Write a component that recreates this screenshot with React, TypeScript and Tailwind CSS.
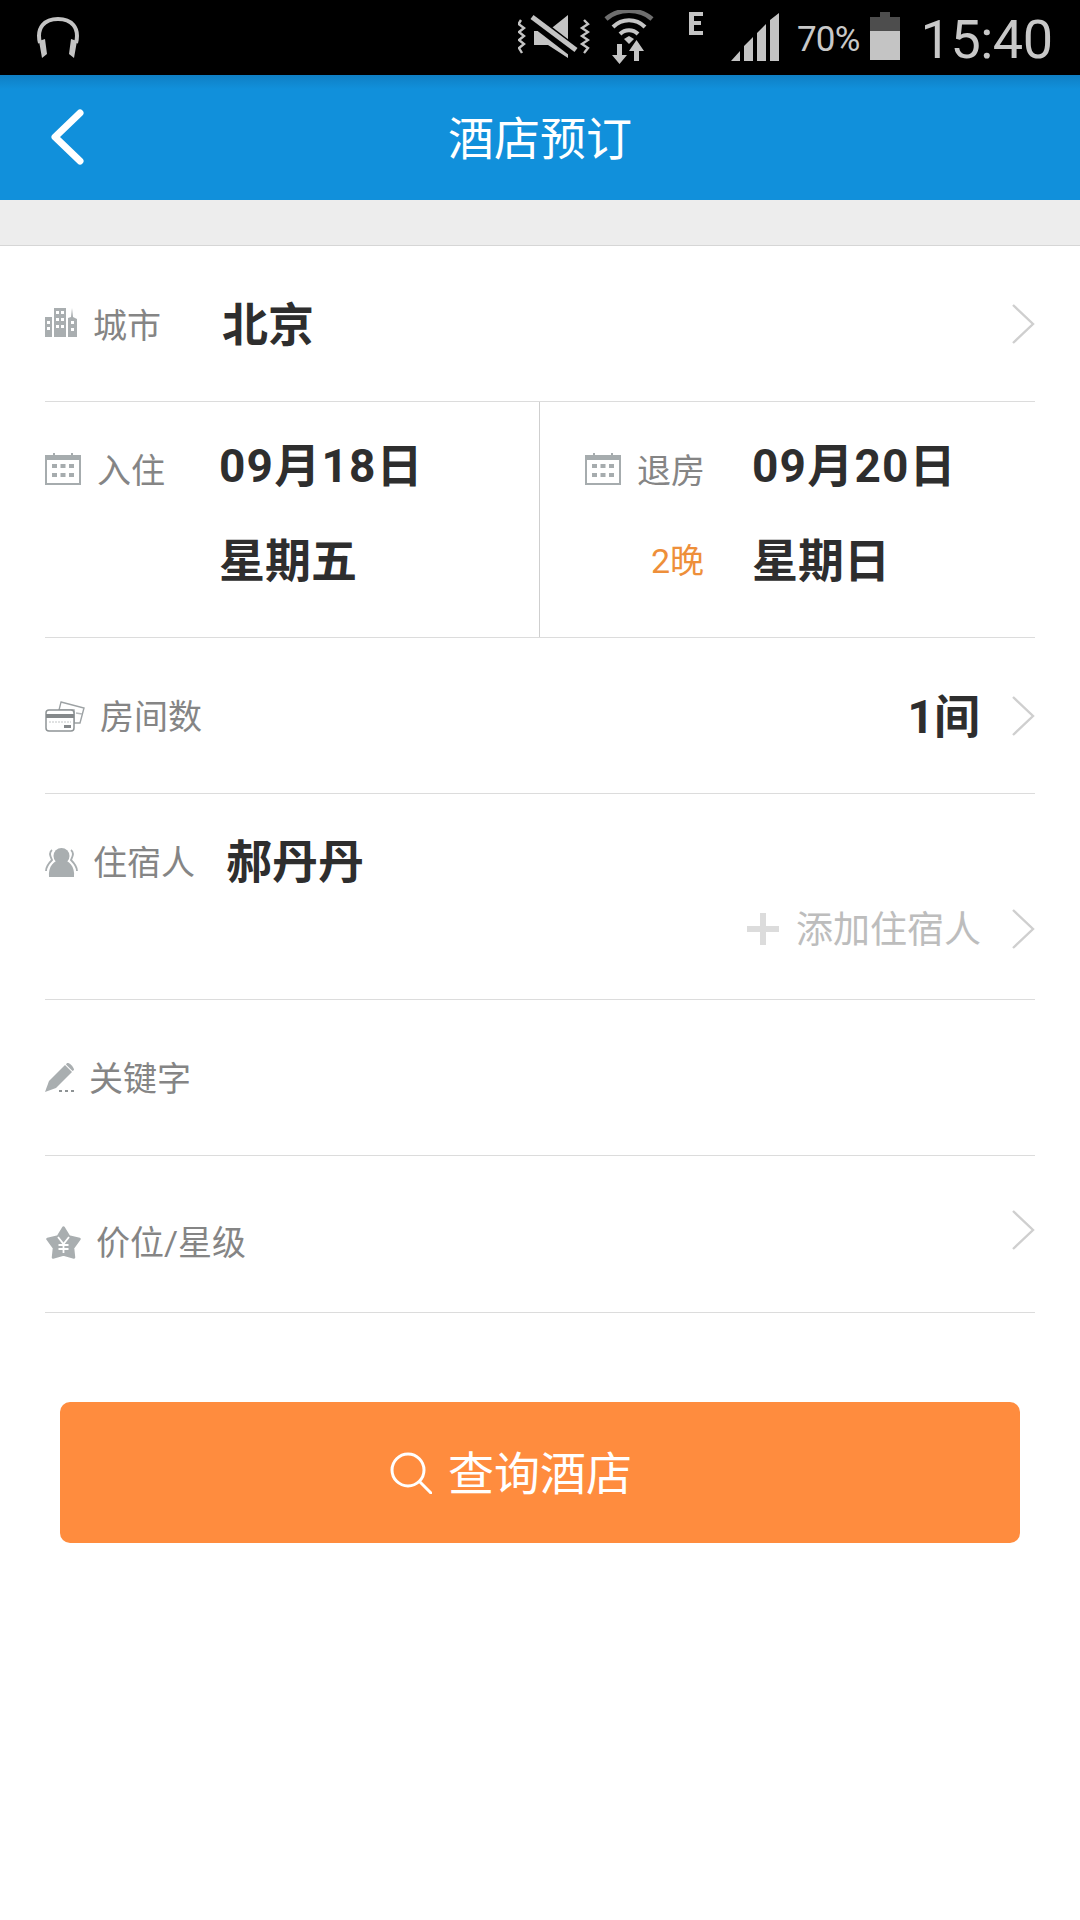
const CJK = { fontFamily: '"Roboto", "Noto Sans CJK SC", sans-serif' };

function Chevron({ className = "" }: { className?: string }) {
  return (
    <svg width="24" height="42" viewBox="0 0 24 42" className={className} fill="none">
      <path d="M2 2 L22 21 L2 40" stroke="#cfcfcf" strokeWidth="2.4" />
    </svg>
  );
}

function CalendarIcon() {
  return (
    <svg width="36" height="32" viewBox="0 0 36 32" fill="none" className="shrink-0 mt-[6px]">
      <rect x="1" y="3" width="34" height="28" stroke="#a6acae" strokeWidth="2" />
      <rect x="0" y="2" width="36" height="5" fill="#a6acae" />
      <rect x="8" y="0" width="2" height="4" fill="#a6acae" />
      <rect x="26" y="0" width="2" height="4" fill="#a6acae" />
      {[7, 15.5, 24].map((x) => (
        <g key={x} fill="#a6acae">
          <rect x={x} y="11" width="5" height="4" />
          <rect x={x} y="20" width="5" height="4" />
        </g>
      ))}
    </svg>
  );
}

function CityIcon() {
  return (
    <svg width="32" height="30" viewBox="0 0 32 30" className="shrink-0 mb-[4px]">
      <rect x="0" y="10" width="7" height="20" fill="#a9aeb0" />
      <rect x="9" y="1" width="12" height="29" fill="#a9aeb0" />
      <path d="M23 30 V11 L26 10 L27 1 L28 10 L32 12 V30 Z" fill="#a9aeb0" />
      <g fill="#fff">
        <rect x="2" y="14" width="3" height="3" />
        <rect x="2" y="20" width="3" height="3" />
        <rect x="11" y="4" width="3" height="3" />
        <rect x="16" y="4" width="3" height="3" />
        <rect x="11" y="11" width="3" height="3" />
        <rect x="16" y="11" width="3" height="3" />
        <rect x="11" y="18" width="3" height="3" />
        <rect x="16" y="18" width="3" height="3" />
        <rect x="26" y="14" width="3" height="3" />
        <rect x="26" y="21" width="3" height="3" />
      </g>
    </svg>
  );
}

function CardsIcon() {
  return (
    <svg width="41" height="32" viewBox="0 0 41 32" fill="none" className="shrink-0">
      <path d="M16 2 L39 8 L35 23 H29 V10 H14 Z" stroke="#9da2a4" strokeWidth="1.4" fill="#fff" />
      <path d="M31 13 L37 14" stroke="#b5b9bb" strokeWidth="1.4" />
      <rect x="1" y="10" width="28" height="21" rx="3" stroke="#8f9496" strokeWidth="1.5" fill="#fff" />
      <rect x="1" y="14" width="28" height="4" fill="#85898b" />
      <path d="M4 22 H26" stroke="#c2c5c6" strokeWidth="1" strokeDasharray="2 1" />
      <rect x="19" y="25" width="7" height="3" fill="#85898b" />
    </svg>
  );
}

function GuestsIcon() {
  return (
    <svg width="33" height="29" viewBox="0 0 33 29" className="shrink-0">
      <path d="M7 2 C3 5 6 10 7 12 C4 15 1 18 1 23 M26 2 C30 5 27 10 26 12 C29 15 32 18 32 23" fill="none" stroke="#a9aeb0" strokeWidth="1.8" />
      <circle cx="16.5" cy="8" r="8" fill="#a9aeb0" />
      <path d="M4 29 C3 18 9 12 16.5 12 C24 12 30 18 29 29 Z" fill="#a9aeb0" />
    </svg>
  );
}

function PencilIcon() {
  return (
    <svg width="30" height="30" viewBox="0 0 30 30" className="shrink-0">
      <path d="M0 29 L4 18 L20 2 L27 9 L11 25 Z" fill="#a9aeb0" />
      <path d="M22 0 C24 -1 29 4 29 7 L27.5 8 L21 1.5 Z" fill="#a9aeb0" />
      <g fill="#8d9294">
        <rect x="14" y="27" width="3" height="2" />
        <rect x="20" y="27" width="3" height="2" />
        <rect x="26" y="27" width="3" height="2" />
      </g>
    </svg>
  );
}

function StarIcon() {
  return (
    <svg width="35" height="33" viewBox="0 0 35 33" className="shrink-0 ml-[1px] mt-[16px]">
      <path
        d="M17.5 1.5 L23 10.5 L33.5 13 L27 22 L28 31.5 L17.5 28.5 L7 31.5 L8 22 L1.5 13 L12 10.5 Z"
        fill="#a9aeb0"
        stroke="#a9aeb0"
        strokeWidth="2.5"
        strokeLinejoin="round"
      />
      <path d="M12 11 L17.5 18 L23 11 M17.5 18 V27 M12.5 19 H22.5 M12.5 23 H22.5" fill="none" stroke="#fff" strokeWidth="1.8" />
    </svg>
  );
}

function StatusBar() {
  return (
    <div className="h-[75px] bg-black flex items-start shrink-0 relative text-[#c8c8c8]">
      <svg width="46" height="42" viewBox="0 0 46 42" fill="none" className="ml-[35px] mt-[17px]">
        <path d="M5 26 C1 10 10 2 23 2 C36 2 45 10 41 26" stroke="#c4c4c4" strokeWidth="4" />
        <path d="M4 24 L10 22 L12 37 L7 41 Z M42 24 L36 22 L34 37 L39 41 Z" fill="#c4c4c4" />
      </svg>
      <svg width="72" height="46" viewBox="0 0 72 46" fill="none" className="ml-[437px] mt-[14px]">
        <path d="M3 6 L0.5 10 L6 14 L1 18 L6 22 L1 26 L6 30 L1 34 L4 39" stroke="#c4c4c4" strokeWidth="2.4" />
        <path d="M66 6 L70 10 L64 14 L70 18 L64 22 L70 26 L64 30 L70 34 L66 39" stroke="#c4c4c4" strokeWidth="2.4" />
        <path d="M16 17 H30 L50 1 V44 L30 31 H16 Z" fill="#c4c4c4" />
        <path d="M10 2 L62 42" stroke="#000" strokeWidth="12" />
        <path d="M14 3 L58 36" stroke="#c4c4c4" strokeWidth="5" />
      </svg>
      <svg width="50" height="54" viewBox="0 0 50 54" fill="none" className="ml-[14px] mt-[10px]">
        <path d="M2 9 C14 -2 36 -2 48 9" stroke="#6e6e6e" strokeWidth="4.5" />
        <path d="M9 17 C18 8 32 8 41 17" stroke="#c4c4c4" strokeWidth="4" />
        <path d="M16 24 C21 19 29 19 34 24" stroke="#c4c4c4" strokeWidth="4" />
        <path d="M20 29 L25 26 L30 29 L25 34 Z" fill="#c4c4c4" />
        <path d="M13 34 H18 V45 H23 L15.5 54 L8 45 H13 Z" fill="#c4c4c4" />
        <path d="M30 51 H35 V41 H40 L32.5 30 L25 41 H30 Z" fill="#c4c4c4" />
      </svg>
      <svg width="14" height="23" viewBox="0 0 14 23" className="ml-[35px] mt-[12px]">
        <path d="M0 0 H14 V4 H5 V9 H12 V13 H5 V19 H14 V23 H0 Z" fill="#c4c4c4" />
      </svg>
      <svg width="48" height="48" viewBox="0 0 48 48" className="ml-[28px] mt-[13px]">
        <path d="M0 48 L9 38 V48 Z M13 48 V33 L22 24 V48 Z M26 48 V20 L35 11 V48 Z M39 48 V7 L48 0 V48 Z" fill="#c4c4c4" />
      </svg>
      <span className="ml-[18px] mt-[20px] text-[35px] leading-[40px] font-normal tracking-[-0.8px]" style={{ fontFamily: "Roboto, sans-serif" }}>
        70%
      </span>
      <svg width="30" height="48" viewBox="0 0 30 48" className="ml-[10px] mt-[12px]">
        <rect x="10" y="0" width="10" height="5" fill="#4d4d4d" />
        <rect x="0" y="5" width="30" height="14" fill="#4d4d4d" />
        <rect x="0" y="19" width="30" height="29" fill="#c4c4c4" />
      </svg>
      <span className="ml-[21px] mt-[9px] text-[54px] leading-[62px] font-normal tracking-[-0.5px]" style={{ fontFamily: "Roboto, sans-serif" }}>
        15:40
      </span>
    </div>
  );
}

function DateColumn({
  icon,
  label,
  date,
  weekday,
  note,
  slot,
  className,
}: {
  icon: React.ReactNode;
  label: string;
  date: string;
  weekday: string;
  note?: string;
  slot: string;
  className: string;
}) {
  return (
    <div className={`flex flex-col pt-[34px] gap-[35px] ${className}`}>
      <div className="flex items-center h-[60px]">
        <div className={`flex items-center gap-[16px] ${slot}`}>
          {icon}
          <span className="text-[34px] text-[#858585] mt-[11px]">{label}</span>
        </div>
        <span className="text-[46px] font-bold text-[#2e2e2e] tracking-[1.2px]">{date}</span>
      </div>
      <div className="flex items-center h-[60px]">
        <div className={`${slot} text-right pr-[48px]`}>
          {note && <span className="text-[34px] text-[#ee8f3a]">{note}</span>}
        </div>
        <span className="text-[46px] font-bold text-[#2e2e2e]">{weekday}</span>
      </div>
    </div>
  );
}

export default function App() {
  return (
    <div className="w-[1080px] h-[1920px] bg-white flex flex-col overflow-hidden" style={CJK}>
      <StatusBar />
      <header className="h-[125px] shrink-0 flex items-center justify-center relative bg-[linear-gradient(#0f7fc4,#1190db_14px)]">
        <svg width="36" height="56" viewBox="0 0 36 56" fill="none" className="absolute left-[49px] top-[34px]">
          <path d="M31 4 L6 28 L31 52" stroke="#fff" strokeWidth="7" strokeLinecap="round" strokeLinejoin="round" />
        </svg>
        <h1 className="text-[46px] text-white font-normal mt-[3px]">酒店预订</h1>
      </header>
      <div className="h-[46px] shrink-0 bg-[#ededed] border-b border-[#d6d6d6]" />

      <div className="mx-[45px] flex flex-col">
        {/* City */}
        <div className="h-[156px] border-b border-[#dcdcdc] flex items-center">
          <CityIcon />
          <span className="ml-[16px] text-[34px] text-[#858585] whitespace-nowrap mt-[5px]">城市</span>
          <span className="ml-[61px] text-[46px] font-bold text-[#2e2e2e] mt-[3px]">北京</span>
          <Chevron className="ml-auto" />
        </div>

        {/* Stay dates */}
        <div className="h-[236px] border-b border-[#dcdcdc] flex">
          <DateColumn
            icon={<CalendarIcon />}
            label="入住"
            date="09月18日"
            weekday="星期五"
            slot="w-[174px]"
            className="w-[495px] border-r border-[#cfcfcf]"
          />
          <DateColumn
            icon={<CalendarIcon />}
            label="退房"
            date="09月20日"
            weekday="星期日"
            note="2晚"
            slot="w-[167px]"
            className="flex-1 pl-[45px]"
          />
        </div>

        {/* Rooms */}
        <div className="h-[156px] border-b border-[#dcdcdc] flex items-center">
          <CardsIcon />
          <span className="ml-[14px] text-[34px] text-[#858585] mt-[4px]">房间数</span>
          <span className="ml-auto text-[46px] font-bold text-[#2e2e2e] mt-[3px]">1间</span>
          <Chevron className="ml-[31px]" />
        </div>

        {/* Guests */}
        <div className="h-[206px] border-b border-[#dcdcdc] flex flex-col">
          <div className="flex items-center h-[60px] mt-[38px]">
            <GuestsIcon />
            <span className="ml-[15px] text-[34px] text-[#858585] mt-[2px]">住宿人</span>
            <span className="ml-[31px] text-[46px] font-bold text-[#2e2e2e] mt-[1px]">郝丹丹</span>
          </div>
          <div className="flex items-center justify-end h-[60px] mt-[7px]">
            <svg width="32" height="32" viewBox="0 0 32 32" className="shrink-0">
              <path d="M13 0 H19 V13 H32 V19 H19 V32 H13 V19 H0 V13 H13 Z" fill="#dcdcdc" />
            </svg>
            <span className="ml-[17px] text-[37px] text-[#bdbdbd] mt-[3px]">添加住宿人</span>
            <Chevron className="ml-[30px]" />
          </div>
        </div>

        {/* Keyword */}
        <div className="h-[156px] border-b border-[#dcdcdc] flex items-center">
          <PencilIcon />
          <span className="ml-[14px] text-[34px] text-[#858585] mt-[4px]">关键字</span>
        </div>

        {/* Price and star rating */}
        <div className="h-[157px] border-b border-[#dcdcdc] flex items-center">
          <StarIcon />
          <span className="ml-[15px] text-[34px] text-[#858585] mt-[19px]">价位/星级</span>
          <Chevron className="ml-auto mb-[8px]" />
        </div>
      </div>

      <button className="mx-[60px] mt-[89px] h-[141px] rounded-[10px] bg-[#ff8c3e] flex items-center justify-center text-white">
        <span className="relative text-[46px] mt-[3px]">
          <svg width="42" height="42" viewBox="0 0 42 42" fill="none" className="absolute left-[-58px] top-[12px]">
            <circle cx="18" cy="18" r="16" stroke="#fff" strokeWidth="3" />
            <path d="M30 30 L41 41" stroke="#fff" strokeWidth="3" strokeLinecap="round" />
          </svg>
          查询酒店
        </span>
      </button>
    </div>
  );
}
